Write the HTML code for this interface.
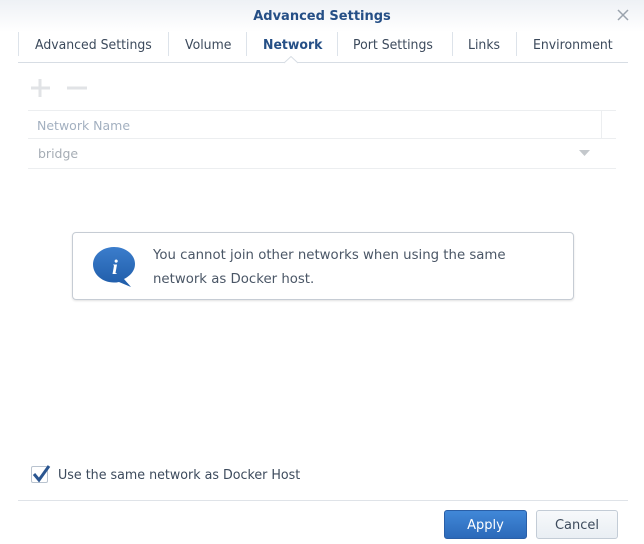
<!DOCTYPE html>
<html><head><meta charset="utf-8"><style>
*{margin:0;padding:0;box-sizing:border-box}
body{width:644px;height:544px;background:#fff;font-family:"DejaVu Sans","Liberation Sans",sans-serif;position:relative;overflow:hidden;color:#3c4a5c}
.a{position:absolute;white-space:nowrap}
.hdr{position:absolute;left:0;top:0;width:644px;height:32px;background:linear-gradient(#eef1f5,#fff)}
.t{font-size:13px;top:38px;color:#3c4a5c;transform:scaleX(.96);transform-origin:left}
.sep{position:absolute;top:32px;width:1px;height:24px;background:#dde3ea}
</style></head><body>
<div class="hdr"></div>
<div class="a" style="left:0;width:644px;top:9px;text-align:center;font-weight:bold;font-size:13px;color:#254f86">Advanced Settings</div>
<svg class="a" style="left:617px;top:9px" width="12" height="12"><path d="M1 1L11 11M11 1L1 11" stroke="#9aa3ad" stroke-width="1.5"/></svg>
<div class="sep" style="left:18px"></div><div class="sep" style="left:168px"></div><div class="sep" style="left:246px"></div><div class="sep" style="left:337px"></div><div class="sep" style="left:452px"></div><div class="sep" style="left:516px"></div>
<div class="a t" style="left:35px">Advanced Settings</div>
<div class="a t" style="left:185px">Volume</div>
<div class="a t" style="left:263px;font-weight:bold;color:#254f86">Network</div>
<div class="a t" style="left:353px">Port Settings</div>
<div class="a t" style="left:468px">Links</div>
<div class="a t" style="left:533px">Environment</div>
<div class="a" style="left:18px;top:62px;width:610px;height:1px;background:#d7dde4"></div>
<svg class="a" style="left:284px;top:56px" width="16" height="8"><path d="M0 7L7 0.5L14 7" fill="#fff" stroke="#d7dde4"/></svg>
<svg class="a" style="left:30px;top:78px" width="60" height="20"><path d="M10 1V19M1 10H20" stroke="#e1e3e6" stroke-width="3"/><path d="M37 10H57" stroke="#e1e3e6" stroke-width="3"/></svg>
<div class="a" style="left:28px;top:110px;width:588px;height:1px;background:#eceef0"></div>
<div class="a" style="left:601px;top:111px;width:1px;height:27px;background:#eceef0"></div>
<div class="a" style="left:37px;top:118px;font-size:12.5px;color:#a3b0c0">Network Name</div>
<div class="a" style="left:28px;top:138px;width:588px;height:1px;background:#eceef0"></div>
<div class="a" style="left:38px;top:146px;font-size:12.5px;color:#a6adb5">bridge</div>
<svg class="a" style="left:579px;top:150px" width="12" height="7"><path d="M0 0H11L5.5 6Z" fill="#c4c8cc"/></svg>
<div class="a" style="left:28px;top:168px;width:588px;height:1px;background:#eceef0"></div>
<div class="a" style="left:72px;top:232px;width:502px;height:68px;border:1px solid #c6ccd4;border-radius:4px;box-shadow:0 1px 2px rgba(0,0,0,.12)"></div>
<svg class="a" style="left:92px;top:245px" width="44" height="44"><defs><linearGradient id="g" x1="0" y1="0" x2="0" y2="1"><stop offset="0" stop-color="#3b7dcc"/><stop offset="1" stop-color="#1f5ca8"/></linearGradient></defs><path d="M22 2C33.5 2 43 9.5 43 19C43 26 38 31 32 34L39 42L27 37C25 37.5 23.5 37.5 22 37.5C10.5 37.5 1 29.5 1 19.5C1 9.5 10.5 2 22 2Z" fill="url(#g)"/><text x="20" y="29" font-family="Liberation Serif,serif" font-style="italic" font-weight="bold" font-size="21" fill="#fff">i</text></svg>
<div class="a" style="left:153px;top:244px;font-size:13.3px;color:#4a5666;line-height:24px">You cannot join other networks when using the same<br>network as Docker host.</div>
<div class="a" style="left:31px;top:466px;width:17px;height:17px;border:1px solid #b9c3cf;border-radius:2px;background:#fff"></div>
<svg class="a" style="left:31px;top:463px" width="20" height="20"><path d="M3 11L8 17L18 3" fill="none" stroke="#2a5590" stroke-width="3"/></svg>
<div class="a" style="left:58px;top:468px;font-size:13px;color:#3c4a5c;transform:scaleX(.975);transform-origin:left">Use the same network as Docker Host</div>
<div class="a" style="left:18px;top:500px;width:610px;height:1px;background:#dfe3e8"></div>
<div class="a" style="left:444px;top:510px;width:83px;height:29px;border:1px solid #2a5fa7;border-radius:3px;background:linear-gradient(#4188d8,#2b69b9);color:#fff;font-size:13px;text-align:center;line-height:29px">Apply</div>
<div class="a" style="left:536px;top:510px;width:82px;height:29px;border:1px solid #c3ccd6;border-radius:3px;background:linear-gradient(#f7f9fb,#e9eef3);color:#3c4a5c;font-size:13px;text-align:center;line-height:29px">Cancel</div>
</body></html>
